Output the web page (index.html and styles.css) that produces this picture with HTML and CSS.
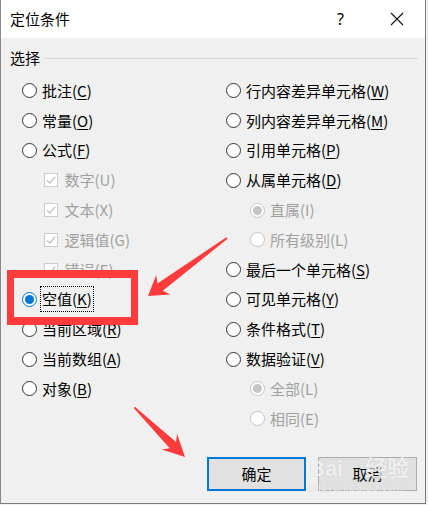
FILE: index.html
```html
<!DOCTYPE html>
<html lang="zh-CN">
<head>
<meta charset="utf-8">
<title>定位条件</title>
<link rel="stylesheet" href="styles.css">
</head>
<body>
<div class="window">
  <div class="titlebar">
    <span class="title">定位条件</span>
    <span class="help">?</span>
    <span class="close"><svg width="14" height="14" viewBox="0 0 14 14"><path d="M1 1 L13 13 M13 1 L1 13" stroke="#111" stroke-width="1.1" fill="none"/></svg></span>
  </div>
  <div class="content">
    <div class="group-head"><span class="group-label">选择</span><span class="rule"></span></div>
    <div class="options">
      <div class="col">
        <div class="row"><span class="radio"></span><span class="label">批注(<u>C</u>)</span></div>
        <div class="row"><span class="radio"></span><span class="label">常量(<u>O</u>)</span></div>
        <div class="row"><span class="radio"></span><span class="label">公式(<u>F</u>)</span></div>
        <div class="row sub-check disabled"><span class="check"><svg width="12" height="12" viewBox="0 0 12 12"><path d="M2 6.2 L4.8 9 L10.2 2.8" stroke="#c4c4c4" stroke-width="1.4" fill="none"/></svg></span><span class="label">数字(U)</span></div>
        <div class="row sub-check disabled"><span class="check"><svg width="12" height="12" viewBox="0 0 12 12"><path d="M2 6.2 L4.8 9 L10.2 2.8" stroke="#c4c4c4" stroke-width="1.4" fill="none"/></svg></span><span class="label">文本(X)</span></div>
        <div class="row sub-check disabled"><span class="check"><svg width="12" height="12" viewBox="0 0 12 12"><path d="M2 6.2 L4.8 9 L10.2 2.8" stroke="#c4c4c4" stroke-width="1.4" fill="none"/></svg></span><span class="label">逻辑值(G)</span></div>
        <div class="row sub-check disabled"><span class="check"><svg width="12" height="12" viewBox="0 0 12 12"><path d="M2 6.2 L4.8 9 L10.2 2.8" stroke="#c4c4c4" stroke-width="1.4" fill="none"/></svg></span><span class="label">错误(E)</span></div>
        <div class="row"><span class="radio checked"></span><span class="label focus">空值(<u>K</u>)</span></div>
        <div class="row"><span class="radio"></span><span class="label">当前区域(<u>R</u>)</span></div>
        <div class="row"><span class="radio"></span><span class="label">当前数组(<u>A</u>)</span></div>
        <div class="row"><span class="radio"></span><span class="label">对象(<u>B</u>)</span></div>
      </div>
      <div class="col">
        <div class="row"><span class="radio"></span><span class="label">行内容差异单元格(<u>W</u>)</span></div>
        <div class="row"><span class="radio"></span><span class="label">列内容差异单元格(<u>M</u>)</span></div>
        <div class="row"><span class="radio"></span><span class="label">引用单元格(<u>P</u>)</span></div>
        <div class="row"><span class="radio"></span><span class="label">从属单元格(<u>D</u>)</span></div>
        <div class="row sub-radio disabled"><span class="radio dis-checked"></span><span class="label">直属(I)</span></div>
        <div class="row sub-radio disabled"><span class="radio"></span><span class="label">所有级别(L)</span></div>
        <div class="row"><span class="radio"></span><span class="label">最后一个单元格(<u>S</u>)</span></div>
        <div class="row"><span class="radio"></span><span class="label">可见单元格(<u>Y</u>)</span></div>
        <div class="row"><span class="radio"></span><span class="label">条件格式(<u>T</u>)</span></div>
        <div class="row"><span class="radio"></span><span class="label">数据验证(<u>V</u>)</span></div>
        <div class="row sub-radio disabled"><span class="radio dis-checked"></span><span class="label">全部(L)</span></div>
        <div class="row sub-radio disabled"><span class="radio"></span><span class="label">相同(E)</span></div>
      </div>
    </div>
    <div class="buttons">
      <button class="btn default">确定</button>
      <button class="btn">取消</button>
    </div>
  </div>

  <div class="highlight"></div>
  <svg class="arrows" width="428" height="505" viewBox="0 0 428 505">
    <polygon fill="#ff3b3b" points="148,296 156.2,275.1 157.4,283.5 226.4,237.2 227.6,238.8 162.8,290.7 170.4,294.5"/>
    <polygon fill="#ff3b3b" points="185,457 161.6,449.5 169.7,448.3 133.7,407.9 134.9,406.7 176,441.9 177,433.7"/>
  </svg>
  <div class="watermark"><span class="wm-big">Bai</span><span class="wm-paw"></span><span class="wm-big">经验</span><span class="wm-small">jingyan.baidu.com</span></div>
</div>
</body>
</html>
```

FILE: styles.css
```css
* { box-sizing: border-box; }
html, body { margin: 0; padding: 0; }
body {
  width: 428px;
  height: 505px;
  background: #f0f0f0;
  font-family: "Noto Sans CJK SC", "Noto Sans", sans-serif;
  font-size: 15px;
  color: #000;
  overflow: hidden;
}
.window {
  position: relative;
  width: 426px;
  height: 504px;
  background: #f0f0f0;
  border-left: 1px solid #8a8a8a;
  border-right: 1px solid #7a7a7a;
  border-bottom: 1px solid #7a7a7a;
}
.titlebar {
  height: 38px;
  background: #fff;
  display: flex;
  align-items: center;
  padding-left: 9px;
}
.title { font-size: 15px; line-height: 20px; flex: 1; }
.help { width: 20px; font-size: 16px; margin-right: 33px; font-family: "Noto Sans", sans-serif; }
.close { width: 30px; display: flex; align-items: center; margin-right: 5px; }
.content { padding: 10px 0 0 0; }
.group-head {
  display: flex;
  align-items: center;
  height: 20px;
  padding-left: 9px;
  padding-right: 7px;
}
.group-label { line-height: 20px; }
.rule { flex: 1; height: 1px; background: #d9d9d9; margin-left: 5px; }
.options {
  display: grid;
  grid-template-columns: 204px 1fr;
  padding-left: 20.5px;
  margin-top: 8px;
}
.row {
  height: 29.8px;
  display: flex;
  align-items: center;
}
.radio {
  width: 15px;
  height: 15px;
  border: 1px solid #333;
  border-radius: 50%;
  background: #fff;
  position: relative;
  flex: none;
}
.radio.checked { border-color: #0078d7; }
.radio.checked::after, .radio.dis-checked::after {
  content: "";
  position: absolute;
  left: 2px; top: 2px;
  width: 9px; height: 9px;
  border-radius: 50%;
  background: #0078d7;
}
.disabled .radio { border-color: #c4c4c4; }
.radio.dis-checked::after { background: #c4c4c4; }
.label { margin-left: 5.5px; line-height: 20px; white-space: nowrap; }
.label u { text-decoration-thickness: 1px; text-underline-offset: 2px; }
.disabled .label { color: #a0a0a0; }
.sub-check { padding-left: 22.5px; }
.sub-radio { padding-left: 24px; }
.check {
  width: 14px; height: 14px;
  border: 1px solid #cccccc;
  background: #fff;
  display: flex; align-items: center; justify-content: center;
  flex: none;
}
.sub-check .label { margin-left: 6.5px; }
.label.focus {
  outline: 1px dotted #000;
  outline-offset: 0;
  padding: 2px 1px;
  margin-left: 4.5px;
}
.buttons {
  display: flex;
  justify-content: flex-end;
  gap: 12px;
  padding-right: 8px;
  margin-top: 23px;
}
.btn {
  width: 99px;
  height: 34px;
  background: #e1e1e1;
  border: 1px solid #adadad;
  font-family: "Noto Sans CJK SC", sans-serif;
  font-size: 15px;
  color: #000;
  padding: 0;
}
.btn.default { border: 2px solid #0078d7; }
.highlight {
  position: absolute;
  left: 6px; top: 270px;
  width: 131px; height: 55px;
  border: 7px solid #ff3b3b;
  border-top-width: 8px;
  border-bottom-width: 8px;
}
.arrows { position: absolute; left: -1px; top: 0; pointer-events: none; }
.watermark {
  position: absolute;
  left: 308px; top: 450px;
  width: 110px; height: 48px;
  color: rgba(255,255,255,0.8);
  pointer-events: none;
  font-family: "Liberation Sans", sans-serif;
}
.wm-big { font-size: 22px; font-weight: bold; text-shadow: 0 0 1px rgba(0,0,0,0.2); }
.wm-paw { display: inline-block; width: 22px; }
.wm-small { position: absolute; left: 0; top: 31px; font-size: 11px; letter-spacing: 0.3px; text-shadow: 0 0 1px rgba(0,0,0,0.2); }
```
